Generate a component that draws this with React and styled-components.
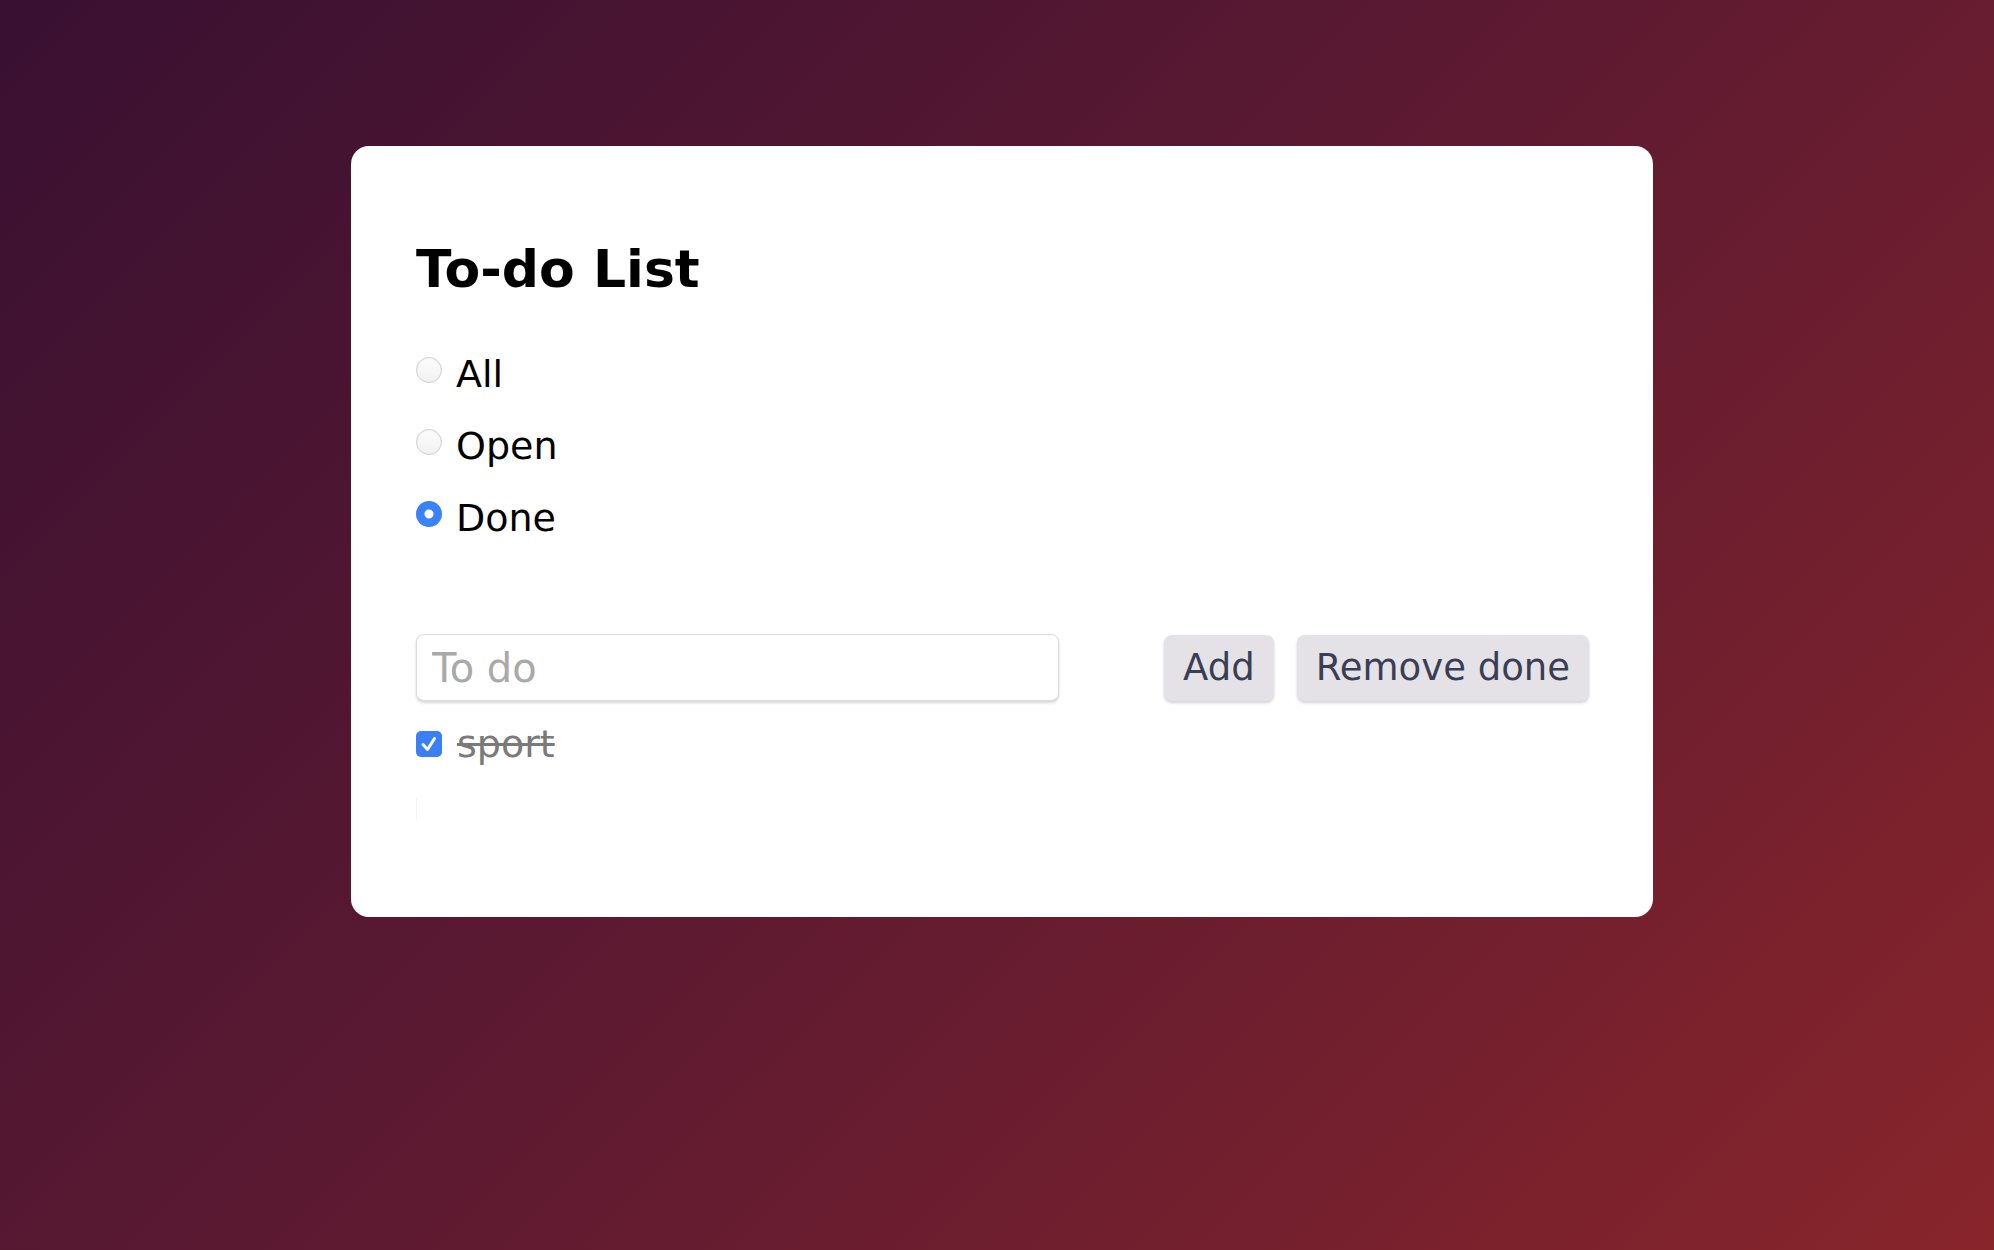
import React, { useState } from 'react';
import styled, { createGlobalStyle } from 'styled-components';

const GlobalStyle = createGlobalStyle`
  html, body {
    margin: 0;
    padding: 0;
  }
  body {
    font-family: "DejaVu Sans", "Liberation Sans", sans-serif;
    background: linear-gradient(135deg, #391032 0%, #5e1a31 50%, #88252b 100%);
    min-height: 1250px;
  }
`;

const Page = styled.div`
  min-height: 1250px;
  padding-top: 146px;
  box-sizing: border-box;
`;

const Card = styled.div`
  width: 1302px;
  height: 771px;
  margin-left: 351px;
  box-sizing: border-box;
  padding: 64px 64px 64px 65px;
  background: #fff;
  border-radius: 18px;
`;

const Title = styled.h1`
  margin: 28px 0 38px;
  font-size: 52px;
  line-height: 62px;
  font-weight: 700;
  color: #000;
`;

const FilterList = styled.div`
  display: flex;
  flex-direction: column;
`;

const FilterRow = styled.label`
  display: flex;
  align-items: center;
  gap: 14px;
  height: 72px;
  font-size: 38px;
  line-height: 72px;
  color: #000;
`;

const Radio = styled.input.attrs({ type: 'radio' })`
  appearance: none;
  width: 26px;
  height: 26px;
  margin: 0 0 8px 0;
  border-radius: 50%;
  box-sizing: border-box;
  border: 1px solid #cfcfcf;
  background: linear-gradient(#fdfdfd, #f1f1f1);
  box-shadow: inset 0 1px 1px rgba(0, 0, 0, 0.04);

  &:checked {
    border: none;
    background: radial-gradient(circle, #fff 0 4px, #3a82f7 5px);
  }
`;

const EntryRow = styled.div`
  display: flex;
  justify-content: space-between;
  align-items: center;
  margin-top: 80px;
`;

const TodoInput = styled.input`
  width: 643px;
  height: 67px;
  box-sizing: border-box;
  padding: 0 15px;
  font-family: inherit;
  font-size: 40px;
  color: #222;
  border: 1px solid #dcdcdf;
  border-radius: 8px;
  box-shadow: 0 2px 3px rgba(0, 0, 0, 0.16);
  outline: none;

  &::placeholder {
    color: #a9a9a9;
  }
`;

const ButtonGroup = styled.div`
  display: flex;
  gap: 23px;
`;

const Button = styled.button`
  height: 66px;
  padding: 0 19px;
  font-family: inherit;
  font-size: 37px;
  color: #393e55;
  background: #e4e2e6;
  border: none;
  border-radius: 8px;
  box-shadow: 0 2px 3px rgba(0, 0, 0, 0.18);
  cursor: pointer;
`;

const TodoList = styled.ul`
  list-style: none;
  margin: 19px 0 0;
  padding: 0;
`;

const TodoItem = styled.li`
  display: flex;
  align-items: center;
  gap: 15px;
  height: 48px;
  font-size: 38px;
  line-height: 48px;
  color: ${({ $done }) => ($done ? '#7a7a7a' : '#000')};
  text-decoration: ${({ $done }) => ($done ? 'line-through' : 'none')};
`;

const Check = styled.span`
  display: inline-flex;
  align-items: center;
  justify-content: center;
  width: 26px;
  height: 26px;
  border-radius: 5px;
  background: ${({ $checked }) => ($checked ? '#3a7ff6' : '#fff')};
  flex-shrink: 0;
`;

const Footer = styled.div`
  margin-top: 30px;
  height: 22px;
  border-left: 1px solid #f1f3fc;
`;

const filters = ['All', 'Open', 'Done'];

export default function App() {
  const [filter, setFilter] = useState('Done');
  const [todos] = useState([{ id: 1, text: 'sport', done: true }]);

  return (
    <Page>
      <GlobalStyle />
      <Card>
        <Title>To-do List</Title>
        <FilterList>
          {filters.map((f) => (
            <FilterRow key={f}>
              <Radio name="filter" checked={filter === f} onChange={() => setFilter(f)} />
              <span>{f}</span>
            </FilterRow>
          ))}
        </FilterList>
        <EntryRow>
          <TodoInput placeholder="To do" />
          <ButtonGroup>
            <Button>Add</Button>
            <Button>Remove done</Button>
          </ButtonGroup>
        </EntryRow>
        <TodoList>
          {todos.map((t) => (
            <TodoItem key={t.id} $done={t.done}>
              <Check $checked={t.done}>
                <svg width="22" height="22" viewBox="0 0 22 22">
                  <path d="M5 11.5 L9.5 16.5 L16.5 5.5" fill="none" stroke="#fff" strokeWidth="3" strokeLinecap="round" strokeLinejoin="round" />
                </svg>
              </Check>
              <span>{t.text}</span>
            </TodoItem>
          ))}
        </TodoList>
        <Footer />
      </Card>
    </Page>
  );
}
